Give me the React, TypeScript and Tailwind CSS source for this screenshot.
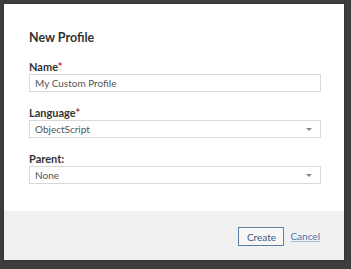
import React from "react";

const font = { fontFamily: 'Lato, "Open Sans", sans-serif' };

function Field({
  label,
  required,
  children,
}: {
  label: string;
  required?: boolean;
  children: React.ReactNode;
}) {
  return (
    <div className="flex flex-col">
      <label className="text-[11px] font-bold leading-[12px] text-[#333] mt-[1px] mb-[1px]">
        {label}
        {required && <span className="text-[#b3322a]">*</span>}
      </label>
      {children}
    </div>
  );
}

function Select({ value }: { value: string }) {
  return (
    <div className="h-[18px] border border-[#d9d9d9] bg-white flex items-center justify-between pl-[5px] pr-[8px]">
      <span className="text-[10px] text-[#555]">{value}</span>
      <svg width="6" height="3" viewBox="0 0 6 3">
        <path d="M0 0 L6 0 L3 3 Z" fill="#888" />
      </svg>
    </div>
  );
}

export default function App() {
  return (
    <div
      className="w-[351px] h-[269px] bg-[#3d3d3d] pt-[4px] pl-[4px]"
      style={font}
    >
      <div className="w-[340px] h-[256px] bg-white flex flex-col shadow-[0_0_2px_rgba(0,0,0,0.4)]">
        <div className="flex-1 pl-[25px] pr-[23px] pt-[26px]">
          <h1 className="text-[12.5px] font-bold leading-[16px] text-[#333] mb-[14px]">
            New Profile
          </h1>
          <div className="flex flex-col gap-[14px]">
            <Field label="Name" required>
              <div className="h-[18px] border border-[#d9d9d9] bg-white flex items-center px-[5px]">
                <span className="text-[10px] text-[#555]">
                  My Custom Profile
                </span>
              </div>
            </Field>
            <Field label="Language" required>
              <Select value="ObjectScript" />
            </Field>
            <Field label="Parent:">
              <Select value="None" />
            </Field>
          </div>
        </div>
        <div className="h-[49px] bg-[#f1f1f1] flex items-start justify-end pr-[24px] pt-[16px] gap-[6px]">
          <button className="h-[19px] w-[46px] border border-[#5b7fa6] bg-[#f7f7f7] text-[10px] text-[#3d5a7c] leading-none">
            Create
          </button>
          <a className="text-[10px] leading-[19px] text-[#4a77aa] underline decoration-[#a9c0da]">
            Cancel
          </a>
        </div>
      </div>
    </div>
  );
}
